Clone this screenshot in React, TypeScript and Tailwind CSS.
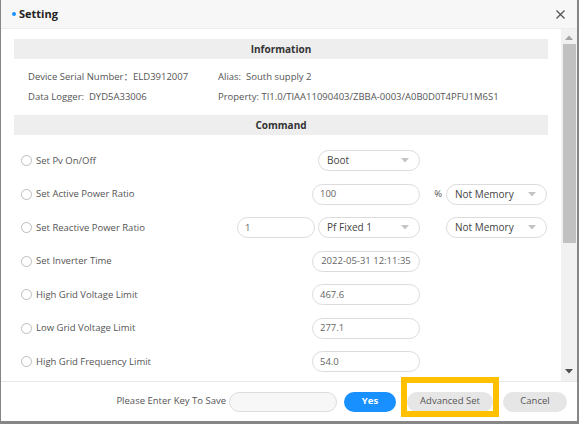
import React from "react"

const font = { fontFamily: '"Open Sans", "Noto Sans CJK SC", sans-serif' }

function Caret() {
  return (
    <svg width="8" height="5" viewBox="0 0 8 5" className="shrink-0">
      <path d="M0 0 L8 0 L4 4.5 Z" fill="#c4c4c4" />
    </svg>
  )
}

function Select({ value, w }: { value: string; w: string }) {
  return (
    <div className={`flex h-[21px] ${w} items-center justify-between rounded-full border border-[#dcdcdc] bg-white pl-[8px] pr-[10px] text-[10px] text-[#444]`}>
      <span className="whitespace-nowrap">{value}</span>
      <Caret />
    </div>
  )
}

function Input({ value, w, center }: { value: string; w: string; center?: boolean }) {
  return (
    <div className={`flex h-[21px] ${w} items-center whitespace-nowrap rounded-full border border-[#dcdcdc] bg-white px-[7px] text-[9.5px] text-[#666] ${center ? "justify-center" : ""}`}>
      {value}
    </div>
  )
}

function Radio() {
  return <span className="h-[11px] w-[11px] shrink-0 rounded-full border border-[#bdbdbd] bg-white" />
}

type Row = {
  label: string
  left?: string
  mid?: React.ReactNode
  pct?: boolean
  right?: React.ReactNode
}

const rows: Row[] = [
  { label: "Set Pv On/Off", mid: <Select value="Boot" w="w-[102px]" /> },
  {
    label: "Set Active Power Ratio",
    mid: <Input value="100" w="w-[108px]" />,
    pct: true,
    right: <Select value="Not Memory" w="w-[101px]" />,
  },
  {
    label: "Set Reactive Power Ratio",
    left: "1",
    mid: <Select value="Pf Fixed 1" w="w-[102px]" />,
    right: <Select value="Not Memory" w="w-[101px]" />,
  },
  { label: "Set Inverter Time", mid: <Input value="2022-05-31 12:11:35" w="w-[108px]" center /> },
  { label: "High Grid Voltage Limit", mid: <Input value="467.6" w="w-[108px]" /> },
  { label: "Low Grid Voltage Limit", mid: <Input value="277.1" w="w-[108px]" /> },
  { label: "High Grid Frequency Limit", mid: <Input value="54.0" w="w-[108px]" /> },
]

export default function App() {
  return (
    <div
      className="flex h-[424px] w-[579px] flex-col overflow-hidden border-b-[3px] border-l border-r-2 border-[#868686] bg-white"
      style={font}
    >
      {/* Cabeçalho */}
      <div className="flex h-[29px] shrink-0 items-center justify-between border-b border-[#ececec] bg-[#f7f7f7] pl-[11px] pr-[12px]">
        <div className="flex items-center gap-[3px]">
          <span className="h-[4px] w-[4px] rounded-full bg-[#1890ff]" />
          <span className="text-[11px] font-bold text-[#222]">Setting</span>
        </div>
        <svg width="9" height="9" viewBox="0 0 9 9">
          <path d="M0.5 0.5 L8.5 8.5 M8.5 0.5 L0.5 8.5" stroke="#555" strokeWidth="1.3" />
        </svg>
      </div>

      {/* Corpo */}
      <div className="flex min-h-0 flex-1">
        <div className="min-w-0 flex-1 overflow-hidden pl-[13px] pr-[13px] pt-[10px]">
          <div className="flex h-[20px] items-center justify-center bg-[#eeeeee] text-[10px] font-bold text-[#333]">
            Information
          </div>
          <div className="py-[8px] pl-[14px] text-[9.5px] text-[#555]">
            <div className="flex h-[20px] items-center whitespace-nowrap">
              <span className="w-[190px]">Device Serial Number：ELD3912007</span>
              <span>Alias:&nbsp; South supply 2</span>
            </div>
            <div className="flex h-[20px] items-center whitespace-nowrap">
              <span className="w-[190px]">Data Logger:&nbsp; DYD5A33006</span>
              <span>Property: TI1.0/TIAA11090403/ZBBA-0003/A0B0D0T4PFU1M6S1</span>
            </div>
          </div>
          <div className="flex h-[20px] items-center justify-center bg-[#eeeeee] text-[10px] font-bold text-[#333]">
            Command
          </div>
          <div className="pt-[9px]">
            {rows.map((r) => (
              <div key={r.label} className="flex h-[33.5px] items-center pl-[7px]">
                <div className="flex w-[216px] items-center gap-[4px] whitespace-nowrap text-[9.5px] text-[#555]">
                  <Radio />
                  <span>{r.label}</span>
                </div>
                <div className="flex w-[183px] items-center justify-end gap-[3px]">
                  {r.left && <Input value={r.left} w="w-[78px]" />}
                  {r.mid}
                </div>
                <div className="w-[26px] pr-[4px] text-right text-[9.5px] text-[#555]">{r.pct ? "%" : ""}</div>
                {r.right}
              </div>
            ))}
          </div>
        </div>

        {/* Barra de rolagem */}
        <div className="flex w-[16px] shrink-0 flex-col items-center bg-[#f1f1f1]">
          <svg width="8" height="5" viewBox="0 0 8 5" className="mt-[6px]">
            <path d="M0 5 L8 5 L4 0.5 Z" fill="#a3a3a3" />
          </svg>
          <div className="mt-[4px] h-[199px] w-[13px] bg-[#c1c1c1]" />
          <div className="flex-1" />
          <svg width="8" height="5" viewBox="0 0 8 5" className="mb-[7px]">
            <path d="M0 0 L8 0 L4 4.5 Z" fill="#505050" />
          </svg>
        </div>
      </div>

      {/* Rodapé */}
      <div className="flex h-[40px] shrink-0 items-center justify-end border-t border-[#e8e8e8] bg-white pr-[10px]">
        <span className="mr-[3px] whitespace-nowrap text-[9.5px] text-[#555]">Please Enter Key To Save</span>
        <div className="h-[20px] w-[108px] rounded-full border border-[#dcdcdc] bg-[#f7f7f7]" />
        <button className="ml-[7px] flex h-[20px] w-[52px] items-center justify-center rounded-full bg-[#1890ff] text-[9.5px] font-bold text-white">
          Yes
        </button>
        <div className="relative ml-[11px]">
          <button className="flex h-[20px] w-[86px] items-center justify-center whitespace-nowrap rounded-full bg-[#e6e6e6] text-[9.5px] text-[#555]">
            Advanced Set
          </button>
          <div className="pointer-events-none absolute bottom-[-5px] left-[-6px] right-[-6px] top-[-15px] border-[6px] border-[#ffc000]" />
        </div>
        <button className="ml-[10px] flex h-[20px] w-[64px] items-center justify-center rounded-full bg-[#e6e6e6] text-[9.5px] text-[#555]">
          Cancel
        </button>
      </div>
    </div>
  )
}
